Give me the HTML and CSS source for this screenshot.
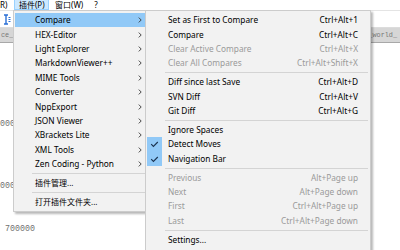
FILE: index.html
```html
<!DOCTYPE html>
<html>
<head>
<meta charset="utf-8">
<link rel="stylesheet" href="styles.css">
</head>
<body>
<div class="app">
  <div class="menubar">
    <span class="mi first">R)</span>
    <span class="mi active">插件(P)</span>
    <span class="mi">窗口(W)</span>
    <span class="mi help">?</span>
  </div>
  <div class="toolbar">
    <svg class="tbicon" width="8" height="11" viewBox="0 0 8 11">
      <path d="M1 1h4M3 1v9M1 10h4" stroke="#2a6fd6" stroke-width="1.4" fill="none"/>
      <path d="M5.5 3.5h2M5.5 5.5h2M5.5 7.5h2" stroke="#2a6fd6" stroke-width="1" fill="none"/>
    </svg>
  </div>
  <div class="tabbar">
    <span class="tab tab-left">ce_b</span>
    <span class="tab tab-right">_world_</span>
  </div>
  <div class="editor">
    <div class="line l1">00000000</div>
    <div class="line l2">00000000</div>
    <div class="line l3">700000</div>
  </div>

  <div class="menu plugins">
    <div class="item hl"><span class="label">Compare</span><svg class="arrow" width="4" height="6" viewBox="0 0 4 6"><path d="M0.8 0.6L3.2 3L0.8 5.4" stroke="#333" stroke-width="0.9" fill="none"/></svg></div>
    <div class="item"><span class="label">HEX-Editor</span><svg class="arrow" width="4" height="6" viewBox="0 0 4 6"><path d="M0.8 0.6L3.2 3L0.8 5.4" stroke="#333" stroke-width="0.9" fill="none"/></svg></div>
    <div class="item"><span class="label">Light Explorer</span><svg class="arrow" width="4" height="6" viewBox="0 0 4 6"><path d="M0.8 0.6L3.2 3L0.8 5.4" stroke="#333" stroke-width="0.9" fill="none"/></svg></div>
    <div class="item"><span class="label">MarkdownViewer++</span><svg class="arrow" width="4" height="6" viewBox="0 0 4 6"><path d="M0.8 0.6L3.2 3L0.8 5.4" stroke="#333" stroke-width="0.9" fill="none"/></svg></div>
    <div class="item"><span class="label">MIME Tools</span><svg class="arrow" width="4" height="6" viewBox="0 0 4 6"><path d="M0.8 0.6L3.2 3L0.8 5.4" stroke="#333" stroke-width="0.9" fill="none"/></svg></div>
    <div class="item"><span class="label">Converter</span><svg class="arrow" width="4" height="6" viewBox="0 0 4 6"><path d="M0.8 0.6L3.2 3L0.8 5.4" stroke="#333" stroke-width="0.9" fill="none"/></svg></div>
    <div class="item"><span class="label">NppExport</span><svg class="arrow" width="4" height="6" viewBox="0 0 4 6"><path d="M0.8 0.6L3.2 3L0.8 5.4" stroke="#333" stroke-width="0.9" fill="none"/></svg></div>
    <div class="item"><span class="label">JSON Viewer</span><svg class="arrow" width="4" height="6" viewBox="0 0 4 6"><path d="M0.8 0.6L3.2 3L0.8 5.4" stroke="#333" stroke-width="0.9" fill="none"/></svg></div>
    <div class="item"><span class="label">XBrackets Lite</span><svg class="arrow" width="4" height="6" viewBox="0 0 4 6"><path d="M0.8 0.6L3.2 3L0.8 5.4" stroke="#333" stroke-width="0.9" fill="none"/></svg></div>
    <div class="item"><span class="label">XML Tools</span><svg class="arrow" width="4" height="6" viewBox="0 0 4 6"><path d="M0.8 0.6L3.2 3L0.8 5.4" stroke="#333" stroke-width="0.9" fill="none"/></svg></div>
    <div class="item"><span class="label">Zen Coding - Python</span><svg class="arrow" width="4" height="6" viewBox="0 0 4 6"><path d="M0.8 0.6L3.2 3L0.8 5.4" stroke="#333" stroke-width="0.9" fill="none"/></svg></div>
    <div class="sep"></div>
    <div class="item"><span class="label cjk">插件管理...</span></div>
    <div class="sep"></div>
    <div class="item"><span class="label cjk">打开插件文件夹...</span></div>
  </div>

  <div class="menu compare">
    <div class="item"><span class="gut"></span><span class="label">Set as First to Compare</span><span class="key">Ctrl+Alt+1</span></div>
    <div class="item"><span class="gut"></span><span class="label">Compare</span><span class="key">Ctrl+Alt+C</span></div>
    <div class="item dis"><span class="gut"></span><span class="label">Clear Active Compare</span><span class="key">Ctrl+Alt+X</span></div>
    <div class="item dis"><span class="gut"></span><span class="label">Clear All Compares</span><span class="key">Ctrl+Alt+Shift+X</span></div>
    <div class="sep"></div>
    <div class="item"><span class="gut"></span><span class="label">Diff since last Save</span><span class="key">Ctrl+Alt+D</span></div>
    <div class="item"><span class="gut"></span><span class="label">SVN Diff</span><span class="key">Ctrl+Alt+V</span></div>
    <div class="item"><span class="gut"></span><span class="label">Git Diff</span><span class="key">Ctrl+Alt+G</span></div>
    <div class="sep"></div>
    <div class="item"><span class="gut"></span><span class="label">Ignore Spaces</span></div>
    <div class="item"><span class="gut on"><svg width="15" height="14" viewBox="0 0 15 14"><path d="M4.2 7.2L6.4 9.4L10.8 5" stroke="#1b3350" stroke-width="1.1" fill="none"/></svg></span><span class="label">Detect Moves</span></div>
    <div class="item"><span class="gut on"><svg width="15" height="14" viewBox="0 0 15 14"><path d="M4.2 7.2L6.4 9.4L10.8 5" stroke="#1b3350" stroke-width="1.1" fill="none"/></svg></span><span class="label">Navigation Bar</span></div>
    <div class="sep"></div>
    <div class="item dis"><span class="gut"></span><span class="label">Previous</span><span class="key">Alt+Page up</span></div>
    <div class="item dis"><span class="gut"></span><span class="label">Next</span><span class="key">Alt+Page down</span></div>
    <div class="item dis"><span class="gut"></span><span class="label">First</span><span class="key">Ctrl+Alt+Page up</span></div>
    <div class="item dis"><span class="gut"></span><span class="label">Last</span><span class="key">Ctrl+Alt+Page down</span></div>
    <div class="sep"></div>
    <div class="item"><span class="gut"></span><span class="label">Settings...</span></div>
  </div>
</div>
</body>
</html>
```
FILE: styles.css
```css
html, body {
  margin: 0;
  padding: 0;
}
body {
  width: 400px;
  height: 250px;
  overflow: hidden;
  background: #fff;
  font-family: "Noto Sans", "Noto Sans CJK SC", sans-serif;
}
.app {
  position: relative;
  width: 400px;
  height: 250px;
  overflow: hidden;
  background: #fff;
}
.menubar {
  display: flex;
  align-items: center;
  height: 10px;
  gap: 3px;
  font-size: 8px;
  color: #000;
  border-bottom: 1px solid #e4e4e4;
}
.mi {
  padding: 0 3px;
  height: 10px;
  line-height: 10px;
  box-sizing: border-box;
}
.mi.first {
  margin-left: -3px;
  margin-right: 1px;
}
.mi.active {
  background: #cce8ff;
  border: 1px solid #99d1ff;
  border-top: none;
  line-height: 9px;
  padding: 0 3.5px;
}
.mi.help {
  margin-left: 2px;
}
.toolbar {
  height: 16px;
  display: flex;
  align-items: center;
  padding-left: 3px;
  border-bottom: 1px solid #dcdcdc;
}
.tbicon {
  display: block;
}
.tabbar {
  height: 14px;
  display: flex;
  justify-content: space-between;
  align-items: stretch;
  background: #ececec;
  border-bottom: 1px solid #a8a8a8;
}
.tab {
  font-family: "Liberation Mono", monospace;
  font-size: 6.8px;
  color: #777;
  line-height: 14px;
  background: #d6d6d6;
  padding: 0 3px;
}
.tab-left {
  margin-left: -2px;
}
.editor {
  display: flex;
  flex-direction: column;
  font-family: "Liberation Mono", monospace;
  font-size: 8.3px;
  color: #707070;
}
.line {
  height: 10px;
  line-height: 10px;
}
.l1 { margin-top: 76px; }
.l2 { margin-top: 52px; }
.l3 { margin-top: 33px; padding-left: 5px; }

.menu {
  position: absolute;
  background: #f2f2f2;
  border: 1px solid #cccccc;
  box-shadow: 2px 2px 2px rgba(0, 0, 0, 0.28);
  font-size: 8.3px;
  color: #000;
}
.plugins {
  left: 13px;
  top: 10px;
  width: 130px;
  padding: 2px 1px 2px 1px;
}
.compare {
  left: 145px;
  top: 10px;
  width: 221px;
  padding: 2px 2px 20px 1px;
  z-index: 2;
}
.item {
  height: 14.4px;
  display: flex;
  align-items: center;
  white-space: nowrap;
  line-height: 10px;
}
.label, .key {
  line-height: 10px;
}
.label.cjk {
  font-size: 8px;
}
.plugins .item {
  padding-left: 20px;
  padding-right: 3px;
}
.plugins .item.hl {
  background: #91c9f7;
}
.arrow {
  margin-left: auto;
  display: block;
}
.compare .item {
  padding-right: 10px;
}
.gut {
  width: 15px;
  height: 100%;
  margin-right: 6px;
  flex: none;
  display: flex;
  align-items: center;
}
.gut.on {
  background: #91c9f7;
}
.gut svg {
  display: block;
}
.key {
  margin-left: auto;
}
.item.dis {
  color: #9a9a9a;
}
.sep {
  height: 4.5px;
  display: flex;
  align-items: center;
}
.sep::after {
  content: "";
  flex: 1;
  height: 1px;
  background: #d4d4d4;
}
.plugins .sep {
  margin-left: 17px;
}
.compare .sep {
  margin-left: 18px;
}
```
